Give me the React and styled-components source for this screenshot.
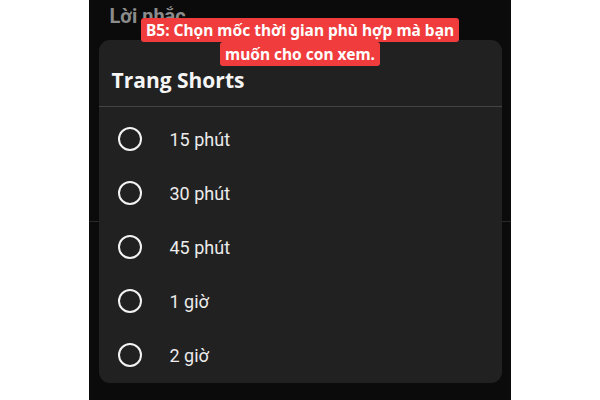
import React from 'react';
import styled, { createGlobalStyle } from 'styled-components';

const GlobalStyle = createGlobalStyle`
	html, body {
		margin: 0;
		padding: 0;
		background: #ffffff;
	}
	body {
		font-family: 'Roboto', 'Liberation Sans', sans-serif;
	}
`;

const options = ['15 phút', '30 phút', '45 phút', '1 giờ', '2 giờ'];

export default function App () {
	return (
		<>
			<GlobalStyle/>
			<Page>
				<Phone>
					<PageTitle>Lời nhắc</PageTitle>
					<BackRow/>
					<Sheet>
						<SheetHeader>Trang Shorts</SheetHeader>
						<Options>
							{options.map(label => (
								<Option key={label}>
									<Radio/>
									<OptionLabel>{label}</OptionLabel>
								</Option>
							))}
						</Options>
					</Sheet>
				</Phone>
				<Caption>
					<CaptionLine>B5: Chọn mốc thời gian phù hợp mà bạn</CaptionLine>
					<CaptionLine>muốn cho con xem.</CaptionLine>
				</Caption>
			</Page>
		</>
	);
}

const Page = styled.div`
	position: relative;
	width: 600px;
	height: 400px;
	display: flex;
	justify-content: center;
	overflow: hidden;
`;

const Phone = styled.div`
	position: relative;
	width: 422px;
	height: 400px;
	background: #0b0b0b;
	margin-left: -1px;
`;

const PageTitle = styled.div`
	padding: 4px 0 0 21px;
	font-family: 'Roboto', sans-serif;
	font-weight: 700;
	font-size: 20px;
	color: #8c8c8c;
`;

const BackRow = styled.div`
	margin-top: 193px;
	height: 1px;
	background: #2a2a2a;
`;

const Sheet = styled.div`
	position: absolute;
	left: 10px;
	right: 9px;
	top: 40px;
	height: 343px;
	background: #212121;
	border-radius: 11px;
	overflow: hidden;
`;

const SheetHeader = styled.div`
	height: 67px;
	padding: 26px 0 0 13px;
	box-sizing: border-box;
	border-bottom: 1px solid #454545;
	font-family: 'Open Sans', sans-serif;
	font-weight: 700;
	font-size: 21px;
	line-height: 28px;
	color: #f5f5f5;
`;

const Options = styled.div`
	display: flex;
	flex-direction: column;
	padding-top: 5px;
`;

const Option = styled.div`
	height: 54px;
	display: flex;
	align-items: center;
	padding-left: 19px;
`;

const Radio = styled.span`
	width: 20px;
	height: 20px;
	border: 2.5px solid #f2f2f2;
	border-radius: 50%;
	flex-shrink: 0;
`;

const OptionLabel = styled.span`
	margin-left: 28px;
	font-family: 'Roboto', sans-serif;
	font-size: 18px;
	color: #ececec;
`;

const Caption = styled.div`
	position: absolute;
	top: 18px;
	left: 0;
	right: 0;
	display: flex;
	flex-direction: column;
	align-items: center;
`;

const CaptionLine = styled.span`
	background: #f03c3c;
	color: #ffffff;
	font-family: 'Noto Sans', sans-serif;
	font-weight: 700;
	font-size: 15.5px;
	line-height: 24px;
	padding: 0 5px;
	border-radius: 3px;
	white-space: nowrap;
`;
